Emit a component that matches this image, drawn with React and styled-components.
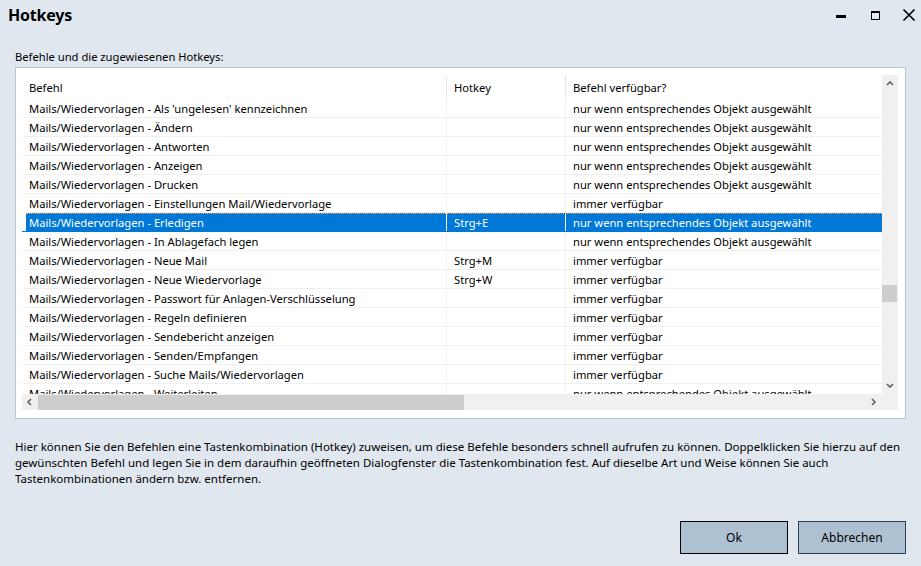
import React from "react";
import styled, { createGlobalStyle } from "styled-components";

const Global = createGlobalStyle`
  html, body { margin: 0; padding: 0; }
  body { background: #e0e7ef; font-family: "Segoe UI", "Noto Sans", "Open Sans", sans-serif; }
  #root { width: 921px; height: 566px; overflow: hidden; }
`;

const Window = styled.div`
  width: 921px;
  height: 566px;
  background: #e0e7ef;
  display: flex;
  flex-direction: column;
  color: #000;
  font-size: 12px;
`;

const TitleBar = styled.div`
  height: 30px;
  display: flex;
  align-items: center;
  padding-left: 8px;
`;

const Title = styled.div`
  flex: 1;
  font-size: 16px;
  font-weight: 700;
  letter-spacing: -0.2px;
`;

const WinButtons = styled.div`
  display: flex;
  align-items: center;
  gap: 10px;
  height: 30px;
`;

const WinButton = styled.div`
  width: 24px;
  height: 30px;
  display: flex;
  align-items: center;
  justify-content: center;
`;

const Content = styled.div`
  display: flex;
  flex-direction: column;
  padding: 0 15px;
  flex: 1;
`;

const Label = styled.div`
  margin-top: 19px;
  height: 18px;
  line-height: 16px;
  font-size: 11.2px;
`;

const ListBox = styled.div`
  height: 352px;
  box-sizing: border-box;
  border: 1px solid #b9c5d1;
  background: #fff;
  padding: 7px 7px 8px 6px;
  display: flex;
  flex-direction: column;
`;

const ViewRow = styled.div`
  display: flex;
  height: 319px;
`;

const Grid = styled.div`
  flex: 1;
  overflow: hidden;
  display: flex;
  flex-direction: column;
  font-size: 11.2px;
`;

const cols = "425px 119px 1fr";

const HeaderRow = styled.div`
  display: grid;
  grid-template-columns: ${cols};
  height: 24px;
  flex-shrink: 0;
`;

const HeaderCell = styled.div`
  padding-left: 7px;
  display: flex;
  align-items: center;
  border-left: ${(p) => (p.$first ? "none" : "1px solid #e5e5e5")};
  margin-left: ${(p) => (p.$first ? "0" : "-1px")};
  height: 22px;
  margin-top: 1px;
`;

const Row = styled.div`
  display: grid;
  grid-template-columns: ${cols};
  height: 19px;
  flex-shrink: 0;
  box-sizing: border-box;
  border-bottom: 1px solid ${(p) => (p.$selected ? "#0078d7" : "#f0f0f0")};
  background: ${(p) =>
    p.$selected ? "linear-gradient(to right, #fff 4px, #0078d7 4px)" : "#fff"};
  color: ${(p) => (p.$selected ? "#fff" : "#000")};
  position: relative;
  ${(p) =>
    p.$selected
      ? `&::before { content: ""; position: absolute; left: 4px; right: 0; top: 0; border-top: 1px dotted #f3a35a; }`
      : ""}
`;

const Cell = styled.div`
  padding-left: 7px;
  padding-top: 1px;
  line-height: 18px;
  white-space: nowrap;
  overflow: hidden;
  border-left: ${(p) => (p.$first ? "none" : `1px solid ${p.$selected ? "#fff" : "#f0f0f0"}`)};
  margin-left: ${(p) => (p.$first ? "0" : "-1px")};
`;

const VScroll = styled.div`
  width: 16px;
  background: #f0f0f0;
  display: flex;
  flex-direction: column;
`;

const ArrowBox = styled.div`
  width: 16px;
  height: ${(p) => p.$h || 17}px;
  display: flex;
  align-items: center;
  justify-content: center;
  flex-shrink: 0;
`;

const VTrack = styled.div`
  flex: 1;
  display: flex;
  flex-direction: column;
`;

const VThumb = styled.div`
  margin-top: ${(p) => p.$top}px;
  height: ${(p) => p.$h}px;
  width: 15px;
  background: #cdcdcd;
`;

const HScrollRow = styled.div`
  display: flex;
  height: 16px;
`;

const HScroll = styled.div`
  flex: 1;
  background: #f0f0f0;
  display: flex;
  align-items: center;
`;

const HTrack = styled.div`
  flex: 1;
  display: flex;
  height: 16px;
  align-items: center;
`;

const HThumb = styled.div`
  width: ${(p) => p.$w}px;
  height: 15px;
  background: #cdcdcd;
`;

const Corner = styled.div`
  width: 16px;
  background: #f0f0f0;
`;

const Description = styled.div`
  margin-top: 20px;
  line-height: 16px;
  font-size: 11.5px;
`;

const Footer = styled.div`
  display: flex;
  justify-content: flex-end;
  gap: 10px;
  padding: 0 15px 12px 0;
  margin-top: auto;
`;

const Button = styled.div`
  width: 108px;
  height: 33px;
  box-sizing: border-box;
  background: #adc1d3;
  border: 1px solid ${(p) => (p.$default ? "#000" : "#2f3f52")};
  display: flex;
  align-items: center;
  justify-content: center;
  font-size: 12px;
`;

const rows = [
  ["Mails/Wiedervorlagen - Als 'ungelesen' kennzeichnen", "", "nur wenn entsprechendes Objekt ausgewählt"],
  ["Mails/Wiedervorlagen - Ändern", "", "nur wenn entsprechendes Objekt ausgewählt"],
  ["Mails/Wiedervorlagen - Antworten", "", "nur wenn entsprechendes Objekt ausgewählt"],
  ["Mails/Wiedervorlagen - Anzeigen", "", "nur wenn entsprechendes Objekt ausgewählt"],
  ["Mails/Wiedervorlagen - Drucken", "", "nur wenn entsprechendes Objekt ausgewählt"],
  ["Mails/Wiedervorlagen - Einstellungen Mail/Wiedervorlage", "", "immer verfügbar"],
  ["Mails/Wiedervorlagen - Erledigen", "Strg+E", "nur wenn entsprechendes Objekt ausgewählt", true],
  ["Mails/Wiedervorlagen - In Ablagefach legen", "", "nur wenn entsprechendes Objekt ausgewählt"],
  ["Mails/Wiedervorlagen - Neue Mail", "Strg+M", "immer verfügbar"],
  ["Mails/Wiedervorlagen - Neue Wiedervorlage", "Strg+W", "immer verfügbar"],
  ["Mails/Wiedervorlagen - Passwort für Anlagen-Verschlüsselung", "", "immer verfügbar"],
  ["Mails/Wiedervorlagen - Regeln definieren", "", "immer verfügbar"],
  ["Mails/Wiedervorlagen - Sendebericht anzeigen", "", "immer verfügbar"],
  ["Mails/Wiedervorlagen - Senden/Empfangen", "", "immer verfügbar"],
  ["Mails/Wiedervorlagen - Suche Mails/Wiedervorlagen", "", "immer verfügbar"],
  ["Mails/Wiedervorlagen - Weiterleiten", "", "nur wenn entsprechendes Objekt ausgewählt"],
];

const Chevron = ({ dir }) => {
  const pts = {
    up: "4,8 7,5 10,8",
    down: "4,5 7,8 10,5",
    left: "8,4 5,7 8,10",
    right: "5,4 8,7 5,10",
  }[dir];
  return (
    <svg width="14" height="14" viewBox="0 0 14 14">
      <polyline points={pts} fill="none" stroke="#606060" strokeWidth="1.6" />
    </svg>
  );
};

export default function App() {
  return (
    <>
      <Global />
      <Window>
        <TitleBar>
          <Title>Hotkeys</Title>
          <WinButtons>
            <WinButton>
              <svg width="12" height="12" viewBox="0 0 12 12">
                <rect x="1" y="6" width="10" height="3" fill="#000" />
              </svg>
            </WinButton>
            <WinButton>
              <svg width="12" height="12" viewBox="0 0 12 12">
                <rect x="2.5" y="2.5" width="8" height="8" fill="none" stroke="#000" strokeWidth="1" />
                <rect x="2" y="2" width="9" height="2" fill="#000" />
              </svg>
            </WinButton>
            <WinButton>
              <svg width="14" height="14" viewBox="0 0 14 14">
                <path d="M1.5 1.5 L12.5 12.5 M12.5 1.5 L1.5 12.5" stroke="#000" strokeWidth="1.7" />
              </svg>
            </WinButton>
          </WinButtons>
        </TitleBar>
        <Content>
          <Label>Befehle und die zugewiesenen Hotkeys:</Label>
          <ListBox>
            <ViewRow>
              <Grid>
                <HeaderRow>
                  <HeaderCell $first>Befehl</HeaderCell>
                  <HeaderCell>Hotkey</HeaderCell>
                  <HeaderCell>Befehl verfügbar?</HeaderCell>
                </HeaderRow>
                {rows.map(([a, b, c, sel], i) => (
                  <Row key={i} $selected={sel}>
                    <Cell $first>{a}</Cell>
                    <Cell $selected={sel}>{b}</Cell>
                    <Cell $selected={sel}>{c}</Cell>
                  </Row>
                ))}
              </Grid>
              <VScroll>
                <ArrowBox>
                  <Chevron dir="up" />
                </ArrowBox>
                <VTrack>
                  <VThumb $top={193} $h={17} />
                </VTrack>
                <ArrowBox>
                  <Chevron dir="down" />
                </ArrowBox>
              </VScroll>
            </ViewRow>
            <HScrollRow>
              <HScroll>
                <ArrowBox>
                  <Chevron dir="left" />
                </ArrowBox>
                <HTrack>
                  <HThumb $w={426} />
                </HTrack>
                <ArrowBox>
                  <Chevron dir="right" />
                </ArrowBox>
              </HScroll>
              <Corner />
            </HScrollRow>
          </ListBox>
          <Description>
            Hier können Sie den Befehlen eine Tastenkombination (Hotkey) zuweisen, um diese Befehle besonders schnell aufrufen zu können. Doppelklicken Sie hierzu auf den
            <br />
            gewünschten Befehl und legen Sie in dem daraufhin geöffneten Dialogfenster die Tastenkombination fest. Auf dieselbe Art und Weise können Sie auch
            <br />
            Tastenkombinationen ändern bzw. entfernen.
          </Description>
        </Content>
        <Footer>
          <Button $default>Ok</Button>
          <Button>Abbrechen</Button>
        </Footer>
      </Window>
    </>
  );
}
